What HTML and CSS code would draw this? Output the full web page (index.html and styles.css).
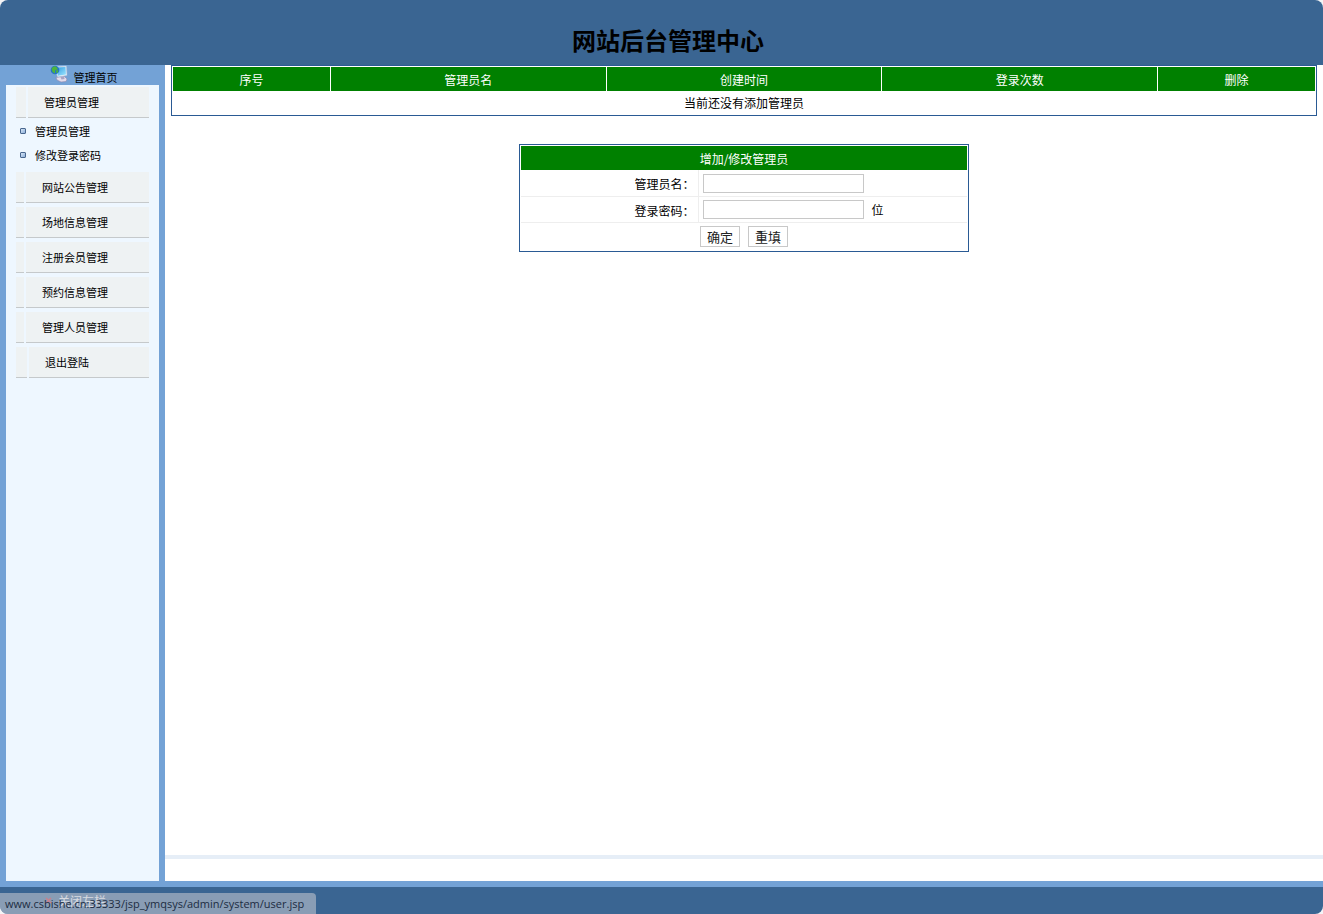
FILE: index.html
```html
<!DOCTYPE html>
<html lang="zh-CN">
  <head>
    <meta charset="UTF-8" />
    <meta name="viewport" content="width=device-width, initial-scale=1.0" />
    <title>网站后台管理中心</title>
    <link rel="stylesheet" href="styles.css">
  </head>
  <body>
    <div class="page">
      <header class="header">
        <h1>网站后台管理中心</h1>
      </header>

      <div class="main">
        <aside class="sidebar">
          <a class="home-link" href="#">
            <svg class="home-icon" width="18" height="18" viewBox="0 0 18 18" aria-hidden="true">
              <defs>
                <linearGradient id="screen" x1="0" y1="0" x2="1" y2="1">
                  <stop offset="0" stop-color="#2f9be0" />
                  <stop offset="1" stop-color="#9fe6ff" />
                </linearGradient>
              </defs>
              <path d="M6 12.500l8-1.500 3 3-1 2.500-5 .5-4-2z" fill="#e2dcec" stroke="#8d86ac" stroke-width=".6" />
              <path d="M10 11l4-.5.5 3.500-3 .5z" fill="#a9a4c4" />
              <path d="M5 1.500L16.500 1l.5 9.500L7.500 12z" fill="#eef5fb" stroke="#9db7d3" stroke-width=".6" />
              <path d="M6 2.500l9.500-.5.5 7.500-8 1.300z" fill="url(#screen)" />
              <circle cx="5" cy="5" r="4.300" fill="#2573c9" />
              <path d="M1.500 3.500Q3.500.8 6 1.500L8 4 5 5.500 5 8.500 2.500 7zM6.500 5l2 .5-1 2.500-1.500-.5z" fill="#4db53c" />
            </svg>
            <span>管理首页</span>
          </a>

          <nav class="menu">
            <a class="menu-title" href="#"><i class="tab tab-medium"></i><span>管理员管理</span></a>
            <ul class="submenu">
              <li><a href="#">管理员管理</a></li>
              <li><a href="#">修改登录密码</a></li>
            </ul>
            <a class="menu-title" href="#"><i class="tab"></i><span>网站公告管理</span></a>
            <a class="menu-title" href="#"><i class="tab"></i><span>场地信息管理</span></a>
            <a class="menu-title" href="#"><i class="tab"></i><span>注册会员管理</span></a>
            <a class="menu-title" href="#"><i class="tab"></i><span>预约信息管理</span></a>
            <a class="menu-title" href="#"><i class="tab"></i><span>管理人员管理</span></a>
            <a class="menu-title" href="#"><i class="tab tab-wide"></i><span>退出登陆</span></a>
          </nav>
        </aside>

        <main class="content">
          <table class="list">
            <thead>
              <tr>
                <th class="col-small">序号</th>
                <th class="col-large">管理员名</th>
                <th class="col-large">创建时间</th>
                <th class="col-large">登录次数</th>
                <th class="col-small">删除</th>
              </tr>
            </thead>
            <tbody>
              <tr>
                <td colspan="5">当前还没有添加管理员</td>
              </tr>
            </tbody>
          </table>

          <form class="admin-form">
            <h2>增加/修改管理员</h2>
            <div class="form-row">
              <label for="username">管理员名：</label>
              <div class="field"><input type="text" id="username" name="username" /></div>
            </div>
            <div class="form-row">
              <label for="password">登录密码：</label>
              <div class="field"><input type="password" id="password" name="password" /><span>位</span></div>
            </div>
            <div class="form-actions">
              <button type="submit">确定</button>
              <button type="reset">重填</button>
            </div>
          </form>

          <div class="content-line"></div>
        </main>
      </div>

      <footer class="footer">
        <a class="toggle" href="#">
          <svg width="7" height="7" viewBox="0 0 7 7" aria-hidden="true">
            <path d="M1 1l5 5M6 1L1 6" stroke="#d8202f" stroke-width="1.500" />
          </svg>
          <span>关闭左栏</span>
        </a>
        <div class="status">www.csbishe.cn:33333/jsp_ymqsys/admin/system/user.jsp</div>
      </footer>
    </div>
  </body>
</html>
```
FILE: styles.css
```css
* {
  margin: 0;
  padding: 0;
  box-sizing: border-box;
}

body {
  font-family: "Noto Sans CJK SC", sans-serif;
  font-size: 12px;
  line-height: 18px;
  color: #000;
  background: #f4f4f6;
}

a {
  color: inherit;
  text-decoration: none;
}

.page {
  min-height: 100vh;
  display: flex;
  flex-direction: column;
  background: #fff;
  border-radius: 8px;
  overflow: hidden;
}

.header {
  height: 65px;
  padding: 22px 0 0 13px;
  text-align: center;
  background: #3a6592;
}

.header h1 {
  font-size: 24px;
  line-height: 36px;
}

.main {
  flex: 1;
  display: flex;
  border-bottom: 6px solid #73a2d6;
}

/* sidebar */
.sidebar {
  width: 165px;
  flex-shrink: 0;
  display: flex;
  flex-direction: column;
  padding: 0 6px;
  font-size: 11px;
  background: #73a2d6;
}

.home-link {
  height: 20px;
  display: flex;
  justify-content: center;
  gap: 6px;
  padding-left: 2px;
  line-height: 24px;
}

.menu {
  flex: 1;
  padding: 2px 10px;
  background: #eef7ff;
}

.menu-title {
  height: 31px;
  display: flex;
  gap: 2px;
  margin-bottom: 4px;
  line-height: 30px;
}

.menu-title span {
  flex: 1;
  padding-left: 16px;
}

.menu-title span,
.tab {
  background: #eef2f3;
  border-bottom: 1px solid #c5c9cb;
}

.tab {
  width: 8px;
}

.tab-medium {
  width: 10px;
}

.tab-wide {
  width: 11px;
}

.submenu {
  list-style: none;
  margin-top: -3px;
  padding-bottom: 5px;
}

.submenu li {
  height: 24px;
  display: flex;
  align-items: center;
  gap: 9px;
  padding-left: 4px;
}

.submenu li::before {
  content: "";
  width: 4px;
  height: 4px;
  border: 1px solid #49678f;
  border-radius: 1px;
  background: linear-gradient(135deg, #d5e5f6, #8fb0d9);
}

/* content */
.content {
  flex: 1;
  display: flex;
  flex-direction: column;
  padding-bottom: 22px;
}

.list {
  margin: 0 6px;
  border: 1px solid #2a5a94;
  border-spacing: 1px;
  table-layout: fixed;
  text-align: center;
}

.list th {
  height: 24px;
  padding-top: 2px;
  font-weight: normal;
  color: #fff;
  background: #008000;
}

.list td {
  height: 22px;
}

.list .col-small {
  width: 4%;
}

.list .col-large {
  width: 7%;
}

.admin-form {
  width: 450px;
  margin: 28px auto 0;
  padding: 1px;
  border: 1px solid #2a5a94;
}

.admin-form h2 {
  height: 24px;
  font-size: 12px;
  font-weight: normal;
  line-height: 26px;
  text-align: center;
  color: #fff;
  background: #008000;
}

.form-row {
  height: 27px;
  display: flex;
  border-bottom: 1px solid #eee;
}

.form-row + .form-row {
  height: 26px;
}

.form-row label {
  width: 40%;
  padding-right: 4px;
  line-height: 27px;
  text-align: right;
  border-right: 1px solid #eee;
}

.field {
  display: flex;
  align-items: center;
  gap: 7px;
  padding-left: 4px;
}

.field input {
  width: 161px;
  height: 19px;
  padding: 0 2px;
  border: 1px solid #c8c8c8;
}

.form-actions {
  height: 27px;
  display: flex;
  justify-content: center;
  align-items: center;
  gap: 8px;
}

.form-actions button {
  width: 40px;
  height: 21px;
  font-family: inherit;
  font-size: 13px;
  line-height: 19px;
  color: #222;
  background: #fff;
  border: 1px solid #c8c8c8;
}

.content-line {
  height: 4px;
  margin-top: auto;
  background: #e6eef7;
}

/* footer */
.footer {
  position: relative;
  height: 27px;
  padding-left: 45px;
  background: #3a6592;
}

.toggle {
  display: flex;
  align-items: center;
  gap: 6px;
  height: 27px;
  color: #fff;
}

/* link address bubble lies over the footer */
.status {
  position: absolute;
  left: 0;
  bottom: 0;
  height: 21px;
  padding: 0 12px 0 5px;
  font-family: "Open Sans", sans-serif;
  font-size: 11px;
  line-height: 21px;
  color: #1c2c42;
  background: rgba(190, 195, 205, 0.6);
  border-radius: 0 4px 0 0;
}
```
